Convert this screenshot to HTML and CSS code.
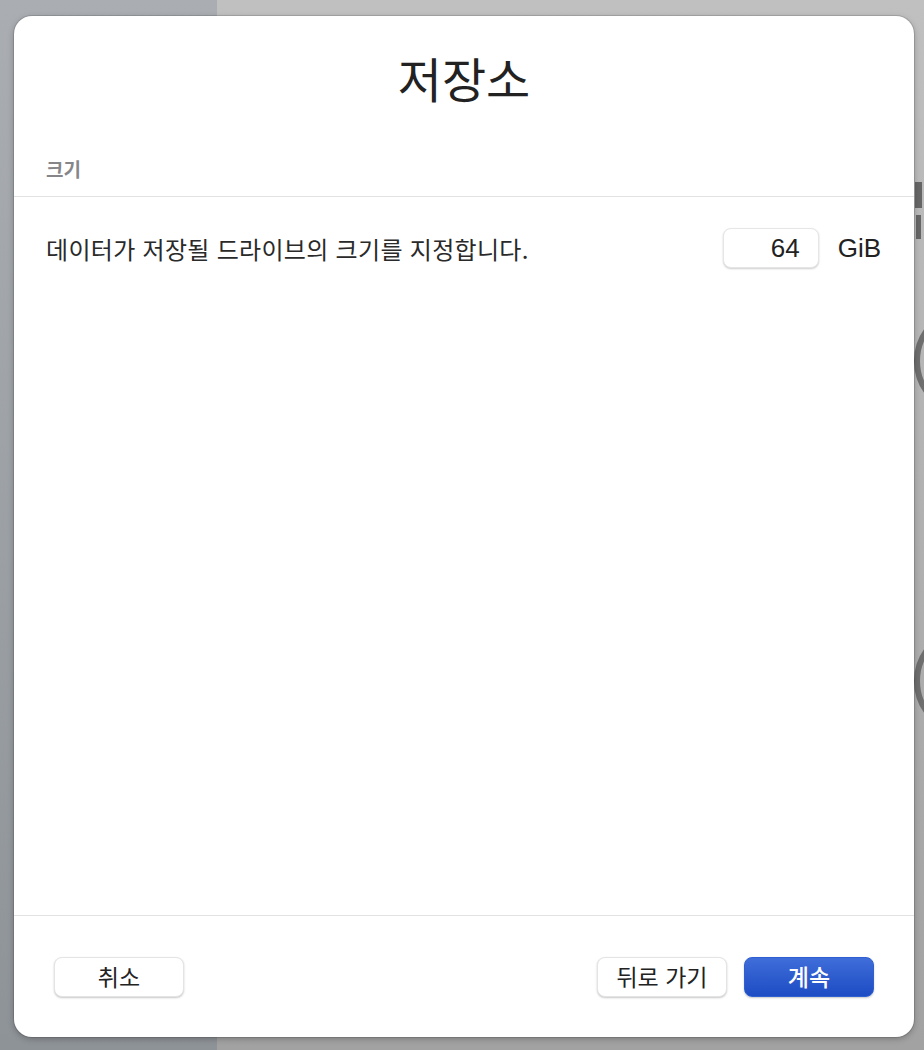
FILE: index.html
```html
<!DOCTYPE html>
<html lang="ko">
<head>
  <meta charset="UTF-8" />
  <meta name="viewport" content="width=device-width, initial-scale=1.0" />
  <title>저장소</title>
  <link rel="stylesheet" href="styles.css">
</head>
<body>
  <div class="backdrop">
    <div class="backdrop-side"></div>
    <div class="backdrop-main">
      <span class="bg-mark"></span>
      <span class="bg-ring ring-one"></span>
      <span class="bg-ring ring-two"></span>
    </div>
  </div>

  <div class="sheet">
    <h1 class="sheet-title">저장소</h1>

    <div class="section-label">크기</div>

    <div class="sheet-body">
      <div class="size-row">
        <span class="size-text">데이터가 저장될 드라이브의 크기를 지정합니다.</span>
        <div class="size-field">
          <input type="text" class="size-input" value="64" />
          <span class="size-unit">GiB</span>
        </div>
      </div>
    </div>

    <div class="sheet-footer">
      <button class="sheet-btn">취소</button>
      <div class="footer-right">
        <button class="sheet-btn">뒤로 가기</button>
        <button class="sheet-btn primary-btn">계속</button>
      </div>
    </div>
  </div>
</body>
</html>
```

FILE: styles.css
```css
* {
  box-sizing: border-box;
  font-family: "Noto Sans CJK KR", "Noto Sans", sans-serif;
}

body {
  margin: 0;
  width: 924px;
  height: 1050px;
  overflow: hidden;
  position: relative;
}

.backdrop {
  display: flex;
  height: 100%;
}

.backdrop-side {
  width: 217px;
  background: linear-gradient(to bottom, #aaaeb2, #8e9398);
}

.backdrop-main {
  flex: 1;
  position: relative;
  overflow: hidden;
  background: linear-gradient(to bottom, #bfc0bf, #a1a2a1);
}

.bg-mark {
  position: absolute;
  left: 698px;
  top: 182px;
  width: 7px;
  height: 26px;
  background: #666;
  box-shadow: 0 32px 0 -1px #666;
}

.bg-ring {
  position: absolute;
  width: 110px;
  height: 110px;
  border: 6px solid #6e6e6e;
  border-radius: 50%;
}

.ring-one {
  left: 697px;
  top: 306px;
}

.ring-two {
  left: 697px;
  top: 626px;
}

.sheet {
  position: absolute;
  left: 14px;
  top: 16px;
  width: 900px;
  height: 1021px;
  background: #fff;
  border-radius: 18px;
  box-shadow: 0 0 0 1px rgba(0, 0, 0, 0.12), 0 2px 6px rgba(0, 0, 0, 0.25);
  display: flex;
  flex-direction: column;
}

.sheet-title {
  margin: 0;
  padding-top: 28px;
  text-align: center;
  font-size: 48px;
  font-weight: 400;
  line-height: 66px;
  color: #222;
}

.section-label {
  padding: 48px 32px 16px;
  font-size: 19px;
  font-weight: 700;
  line-height: 22px;
  color: #86868a;
  border-bottom: 1px solid #e2e2e2;
}

.sheet-body {
  flex: 1;
  padding: 31px 33px 0 32px;
}

.size-row {
  display: flex;
  justify-content: space-between;
  align-items: center;
}

.size-text {
  font-size: 24px;
  letter-spacing: 0.3px;
  color: #2a2a2a;
}

.size-field {
  display: flex;
  align-items: center;
  gap: 19px;
}

.size-input {
  width: 96px;
  height: 40px;
  padding: 0 18px 0 0;
  border: 1px solid #e6e6e6;
  border-radius: 8px;
  box-shadow: 0 1px 2px rgba(0, 0, 0, 0.2);
  text-align: right;
  font-size: 26px;
  font-family: "Liberation Sans", sans-serif;
  color: #222;
  outline: none;
}

.size-unit {
  font-size: 26px;
  font-family: "Liberation Sans", sans-serif;
  color: #222;
}

.sheet-footer {
  border-top: 1px solid #e2e2e2;
  height: 122px;
  padding: 41px 40px 0 40px;
  display: flex;
  justify-content: space-between;
  align-items: flex-start;
}

.footer-right {
  display: flex;
  gap: 17px;
}

.sheet-btn {
  width: 130px;
  height: 40px;
  padding-bottom: 3px;
  border: 1px solid #e4e4e4;
  border-radius: 8px;
  background: #fff;
  box-shadow: 0 1px 2px rgba(0, 0, 0, 0.22);
  font-size: 23px;
  color: #222;
  cursor: pointer;
}

.primary-btn {
  border-color: #2f5fd0;
  background: linear-gradient(to bottom, #3f6dd9, #1d4cc4);
  color: #fff;
  font-weight: 500;
}
```
